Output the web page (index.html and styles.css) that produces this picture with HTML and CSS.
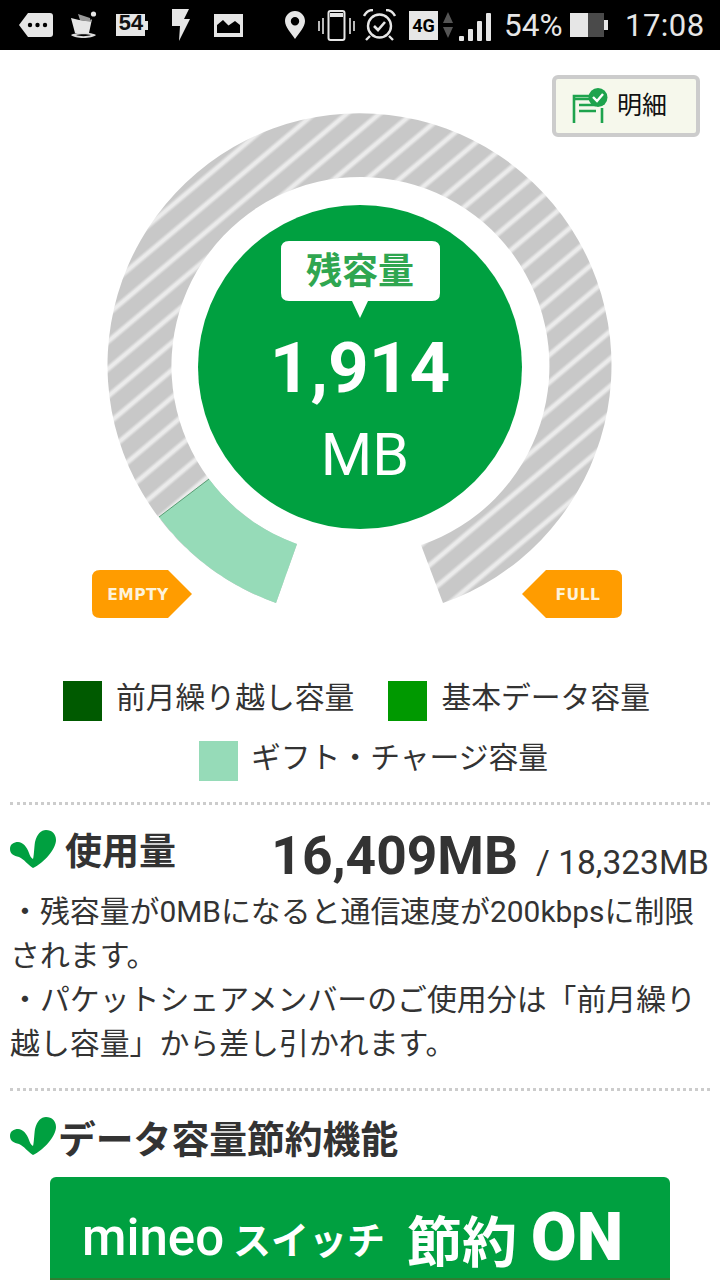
FILE: index.html
```html
<!DOCTYPE html>
<html lang="ja">
<head>
  <meta charset="UTF-8">
  <meta name="viewport" content="width=device-width, initial-scale=1.0">
  <title>mineo</title>
  <link rel="stylesheet" href="styles.css">
</head>
<body>
  <svg class="defs" width="0" height="0">
    <defs>
      <linearGradient id="stripeFade" x1="0" y1="0" x2="0" y2="1">
        <stop offset="0" stop-color="#c8c8c8"/>
        <stop offset="0.32" stop-color="#c8c8c8"/>
        <stop offset="0.45" stop-color="#ebebeb"/>
        <stop offset="0.55" stop-color="#ebebeb"/>
        <stop offset="0.68" stop-color="#c8c8c8"/>
        <stop offset="1" stop-color="#c8c8c8"/>
      </linearGradient>
      <pattern id="stripes" width="40" height="21" patternUnits="userSpaceOnUse" patternTransform="rotate(-40) translate(0 5.500)">
        <rect width="40" height="21" fill="url(#stripeFade)"/>
      </pattern>
      <symbol id="leaf" viewBox="0 0 46 40">
        <path d="M0 20C0 15 4 13 8 13C13 13 17 18 19 24C20 27 21 29 23 30C24 27 24 20 25 13C27 5 31 1 36 1C42 1 46 5 46 11C46 20 34 34 23 39C18 36 14 30 9 28C4 27 0 25 0 20Z"/>
      </symbol>
    </defs>
  </svg>

  <header class="status">
    <svg class="ic ic-tag" viewBox="0 0 34 24"><path d="M0 12L9 0H31Q34 0 34 3V21Q34 24 31 24H9Z" fill="#e6e6e6"/><circle cx="11" cy="12" r="2.2"/><circle cx="18.500" cy="12" r="2.2"/><circle cx="26" cy="12" r="2.2"/></svg>
    <svg class="ic ic-folder" viewBox="0 0 27 28"><circle cx="23.500" cy="3" r="2.6" fill="#e6e6e6"/><path d="M1 7L9 9L20 10L22 8L19 22L5 22Z" fill="#e6e6e6"/><path d="M8 3L20 7L21 11L10 9Z" fill="#9a9a9a"/><path d="M1 24C5 21 22 21 26 24C22 28 5 28 1 24ZM6 24C9 25.500 18 25.500 21 24C18 23 9 23 6 24Z" fill="#dcdcdc" fill-rule="evenodd"/></svg>
    <div class="batt54">54</div><i class="nub"></i>
    <svg class="ic ic-bolt" viewBox="0 0 20 32"><path d="M2 0H19L14 10H20L9 32L10 17H2Z" fill="#e6e6e6"/></svg>
    <svg class="ic ic-pic" viewBox="0 0 29 23"><path d="M0 0H29V23H0ZM3 19H26V11L21 7L14.500 11.500L9 6L3 11Z" fill="#e6e6e6" fill-rule="evenodd"/></svg>
    <svg class="ic ic-pin" viewBox="0 0 20 28"><path d="M10 0C15.500 0 20 4.500 20 10C20 16 14 22 10 28C6 22 0 16 0 10C0 4.500 4.500 0 10 0ZM10 6A4.200 4.200 0 1 0 10 14.400A4.200 4.200 0 1 0 10 6Z" fill="#e6e6e6" fill-rule="evenodd"/></svg>
    <svg class="ic ic-vib" viewBox="0 0 37 31"><g fill="none" stroke="#e6e6e6"><rect x="10.500" y="1" width="16" height="29" rx="2" stroke-width="2"/><path d="M1 11V21M5 8V24M32 8V24M36 11V21" stroke-width="1.600"/></g><rect x="12" y="3" width="13" height="4" fill="#e6e6e6"/></svg>
    <svg class="ic ic-alarm" viewBox="0 0 33 32"><g fill="none" stroke="#e6e6e6"><circle cx="16.500" cy="17" r="11.500" stroke-width="2.400"/><path d="M11 17L15 21L22 13" stroke-width="2.600"/><path d="M1 7C3 3 6 1 10 1M32 7C30 3 27 1 23 1M7 27L3 31M26 27L30 31" stroke-width="2.400"/></g></svg>
    <div class="lte">4G</div>
    <svg class="ic ic-arrows" viewBox="0 0 10 26"><path d="M5 0L10 11H0Z" fill="#555"/><path d="M0 15H10L5 26Z" fill="#555"/></svg>
    <svg class="ic ic-signal" viewBox="0 0 32 28"><g fill="#e6e6e6"><rect x="0" y="23" width="5" height="5" rx="1"/><rect x="9" y="16" width="5" height="12" rx="1"/><rect x="18" y="8" width="5" height="20" rx="1"/><rect x="27" y="0" width="5" height="28" rx="1"/></g></svg>
    <span class="pct">54%</span>
    <svg class="ic ic-batt" viewBox="0 0 38 24"><rect width="34" height="24" fill="#e6e6e6"/><rect x="18" width="16" height="24" fill="#4a4a4a"/><rect x="34" y="7" width="4" height="10" fill="#e6e6e6"/></svg>
    <span class="clock">17:08</span>
  </header>

  <main>
    <section class="gauge">
      <svg class="dial" viewBox="0 50 720 610" width="720" height="610">
        <path d="M276 603A252 252 0 1 1 443 603L421 545A189 189 0 1 0 297 544Z" fill="url(#stripes)"/>
        <path d="M159 517A252 252 0 0 0 276 603L297 544A189 189 0 0 1 209 479Z" fill="#96dbb8"/>
        <path d="M159 517L209 479" stroke="#3f8a5c" stroke-width="0.8"/>
        <circle cx="360" cy="367" r="162" fill="#00a040"/>
        <path d="M289 241H432Q440 241 440 249V293Q440 301 432 301H368L360 318L352 301H289Q281 301 281 293V249Q281 241 289 241Z" fill="#fff"/>
        <text class="dial-label" x="360" y="284">残容量</text>
        <text class="dial-num" x="360" y="392">1,914</text>
        <text class="dial-unit" x="365" y="475">MB</text>
        <path d="M100 570H168L192 594L168 618H100Q92 618 92 610V578Q92 570 100 570Z" fill="#ff9c00"/>
        <text class="dial-tag" x="138" y="600">EMPTY</text>
        <path d="M614 570H546L522 594L546 618H614Q622 618 622 610V578Q622 570 614 570Z" fill="#ff9c00"/>
        <text class="dial-tag" x="578" y="600">FULL</text>
      </svg>
      <a class="detail-btn" href="#">
        <svg class="detail-ic" viewBox="0 0 36 36"><path d="M2 35V8H24M2 11H26M30 20V35M7 17H24M7 23H24" fill="none" stroke="#1ea34d" stroke-width="2.600"/><path d="M26 0A9.500 9.500 0 1 1 26 19A9.500 9.500 0 1 1 26 0Z" fill="#1ea34d"/><path d="M21 9L25 13L31 6" fill="none" stroke="#fff" stroke-width="2.400"/></svg>
        <span>明細</span>
      </a>
    </section>

    <ul class="legend">
      <li><i class="sw sw-carry"></i>前月繰り越し容量</li>
      <li><i class="sw sw-base"></i>基本データ容量</li>
      <li class="legend-last"><i class="sw sw-gift"></i>ギフト・チャージ容量</li>
    </ul>

    <section class="usage">
      <div class="usage-head">
        <svg class="leaf"><use href="#leaf"/></svg>
        <h2>使用量</h2>
        <div class="usage-val"><b>16,409MB</b><span>/ 18,323MB</span></div>
      </div>
      <p>・残容量が0MBになると通信速度が200kbpsに制限されます。<br>・パケットシェアメンバーのご使用分は「前月繰り越し容量」から差し引かれます。</p>
    </section>

    <section class="saving">
      <div class="saving-head">
        <svg class="leaf"><use href="#leaf"/></svg>
        <h2>データ容量節約機能</h2>
      </div>
      <a class="switch-btn" href="#"><span class="sw-a">mineo</span><span class="sw-b">スイッチ</span><span class="sw-c">節約</span><span class="sw-d">ON</span></a>
    </section>
  </main>
</body>
</html>
```

FILE: styles.css
```css
html, body {
  margin: 0;
  height: 1280px;
  overflow: hidden;
  background: #fff;
}

body {
  font-family: Roboto, "Noto Sans CJK JP", sans-serif;
  color: #333;
}

.defs {
  display: block;
  height: 0;
}

/* status bar */
.status {
  height: 50px;
  background: #000;
  color: #e6e6e6;
  display: flex;
  align-items: center;
  padding-left: 19px;
}

.ic { display: block; flex: none; fill: #000; }
.ic-tag { width: 34px; height: 24px; }
.ic-folder { width: 27px; height: 28px; margin-left: 17px; }
.ic-bolt { width: 20px; height: 32px; margin-left: 22px; }
.ic-pic { width: 29px; height: 23px; margin-left: 24px; }
.ic-pin { width: 20px; height: 28px; margin-left: 42px; }
.ic-vib { width: 37px; height: 31px; margin-left: 13px; }
.ic-alarm { width: 33px; height: 32px; margin-left: 8px; }
.ic-arrows { width: 10px; height: 26px; margin-left: 5px; }
.ic-signal { width: 32px; height: 28px; margin-left: 6px; margin-top: 4px; }
.ic-batt { width: 38px; height: 24px; margin-left: 9px; }

.batt54 {
  width: 29px;
  height: 22px;
  margin-left: 19px;
  background: #e6e6e6;
  color: #111;
  font: bold 22px/22px "Liberation Mono", monospace;
  letter-spacing: -1px;
  text-align: center;
}

.nub {
  width: 3px;
  height: 9px;
  background: #e6e6e6;
}

.lte {
  width: 29px;
  height: 29px;
  margin-left: 13px;
  background: #e6e6e6;
  color: #000;
  font: bold 18px/29px Roboto, sans-serif;
  text-align: center;
}

.pct {
  margin-left: 13px;
  width: 57px;
  font-size: 31.500px;
}

.clock {
  margin-left: 17px;
  font-size: 31px;
  letter-spacing: 0.5px;
}

/* gauge */
.gauge {
  position: relative;
  height: 610px;
}

.dial { display: block; }

.dial-label {
  font-size: 36px;
  font-weight: 700;
  fill: #2fa650;
  text-anchor: middle;
}

.dial-num {
  font-size: 71px;
  font-weight: 700;
  fill: #fff;
  text-anchor: middle;
}

.dial-unit {
  font-size: 59px;
  fill: #fff;
  text-anchor: middle;
}

.dial-tag {
  font: bold 15.500px "DejaVu Sans", sans-serif;
  letter-spacing: 0.5px;
  fill: #fdf3dc;
  text-anchor: middle;
}

.detail-btn {
  position: absolute;
  top: 25px;
  right: 20px;
  box-sizing: border-box;
  width: 148px;
  height: 62px;
  border: 4px solid #ccc;
  border-radius: 6px;
  background: #f6f8ec;
  display: flex;
  align-items: center;
  padding-left: 16px;
  color: #111;
  font-size: 25px;
  text-decoration: none;
}

.detail-btn span {
  margin-top: -6px;
}

.detail-ic {
  width: 36px;
  height: 36px;
  margin-right: 9px;
}

/* legend */
.legend {
  list-style: none;
  margin: 21px 0 0;
  padding: 0 7px 0 0;
  display: flex;
  flex-wrap: wrap;
  justify-content: center;
  column-gap: 34px;
  row-gap: 20px;
  font-size: 29.800px;
  height: 100px;
}

.legend li {
  display: flex;
  align-items: flex-start;
  height: 40px;
  line-height: 34px;
}

.legend .legend-last {
  margin-left: 34px;
}

.sw {
  width: 39px;
  height: 40px;
  margin-right: 14px;
}

.sw-carry { background: #005a00; }
.sw-base { background: #009900; }
.sw-gift { background: #96dbb8; margin-right: 13px; }

/* sections */
.usage, .saving {
  margin: 0 10px;
  border-top: 3px dotted #ccc;
}

.usage {
  margin-top: 21px;
  height: 283px;
}

.usage-head, .saving-head {
  display: flex;
  align-items: center;
}

.usage-head {
  height: 88px;
}

.leaf {
  width: 46px;
  height: 40px;
  fill: #00a040;
  flex: none;
}

h2 {
  margin: 0;
  font-size: 37px;
  font-weight: 700;
  white-space: nowrap;
}

.usage-head h2 {
  margin-left: 9px;
}

.usage-val {
  margin-left: auto;
  margin-top: 14px;
  margin-right: 1px;
  display: flex;
  align-items: baseline;
}

.usage-val b {
  font-size: 53.300px;
}

.usage-val span {
  margin-left: 18px;
  font-size: 33.500px;
}

.usage p {
  margin: -3px 0 0;
  font-size: 29.900px;
  line-height: 44px;
}

.saving-head {
  height: 90px;
}

.saving-head h2 {
  margin-left: 2px;
  font-size: 37.800px;
}

.switch-btn {
  box-sizing: border-box;
  display: flex;
  align-items: center;
  height: 103px;
  margin: -4px 40px 0 40px;
  padding: 20px 0 0 32px;
  background: #00a040;
  border-bottom: 2px solid #2f7d32;
  border-radius: 6px 6px 0 0;
  color: #fff;
  text-decoration: none;
  font-weight: 700;
  white-space: nowrap;
}

.sw-a { font-size: 51px; font-weight: 500; }
.sw-b { font-size: 38px; margin-left: 9px; }
.sw-c { font-size: 55px; margin-left: 22px; }
.sw-d { font-size: 66px; margin-left: 14px; font-weight: 900; }
```
